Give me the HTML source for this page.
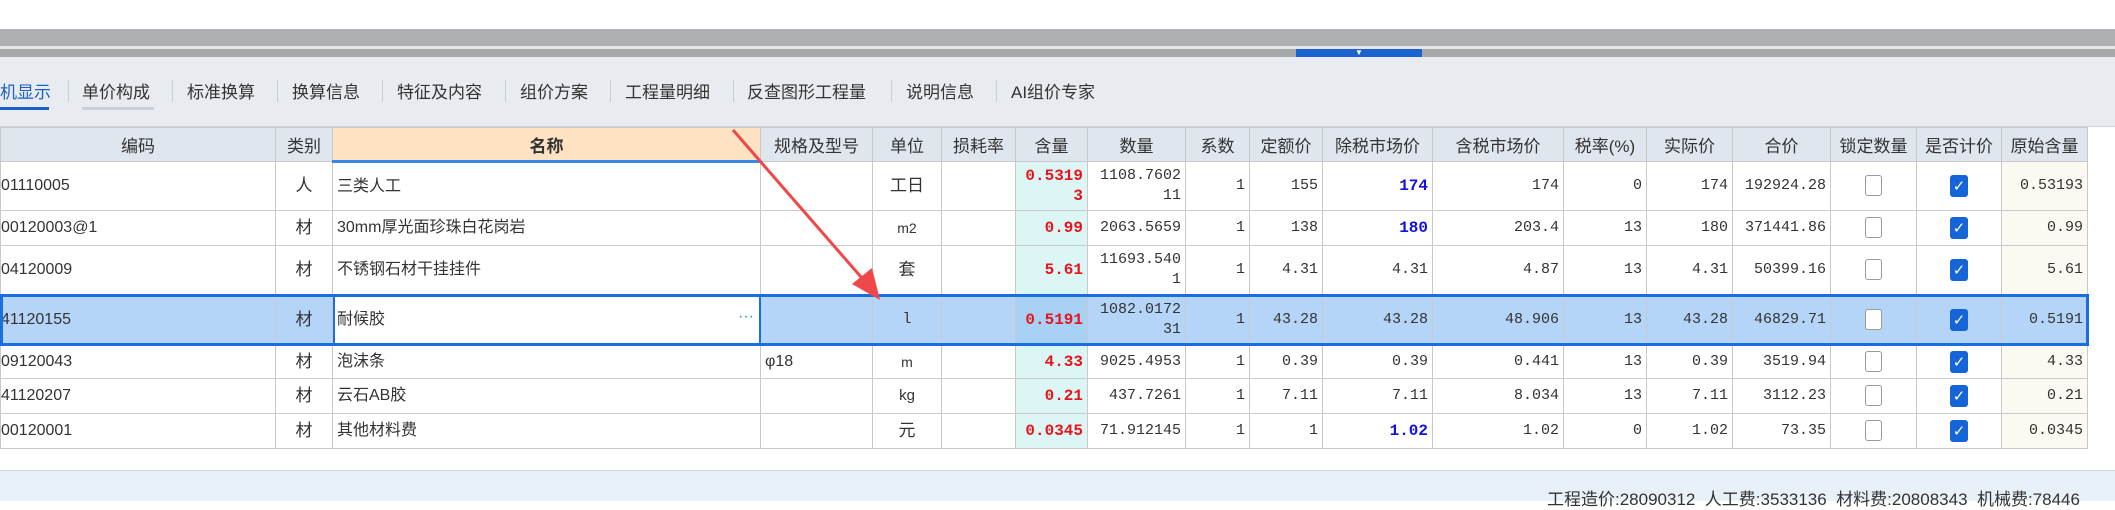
<!DOCTYPE html>
<html><head><meta charset="utf-8"><style>
*{margin:0;padding:0;box-sizing:border-box}
body{width:2115px;height:501px;overflow:hidden;background:#fff;position:relative;font-family:"Liberation Sans","Noto Sans CJK SC",sans-serif;color:#222}
.abs{position:absolute}
.tab{position:absolute;top:78px;font-size:17px;color:#333;white-space:nowrap}
.sep{position:absolute;top:80px;width:1px;height:22px;background:#c9ced4}
table{position:absolute;left:0;top:127px;border-collapse:collapse;table-layout:fixed;width:2087px;font-size:16px}
td,th{border:1px solid #c9c9c9;overflow:hidden;white-space:nowrap;padding:0 4px}
th{background:#dfe6ee;font-weight:normal;height:34px;color:#333;font-size:17px}
th.nm{background:#fde3c3;font-weight:bold;border-bottom:3px solid #3a86e8}
td{font-family:"Liberation Mono","Noto Sans CJK SC",monospace;font-size:15px;text-align:right;color:#333;line-height:20px}
td.l{text-align:left;font-family:"Liberation Sans","Noto Sans CJK SC",sans-serif;font-size:16px}
td.c{text-align:center;font-family:"Liberation Sans","Noto Sans CJK SC",sans-serif;font-size:17px}
td.q{background:#dcf6f6;color:#e8141c;font-weight:bold;font-size:16px}
td.o{background:#fcf8f2}
td.b{color:#1010e0;font-weight:bold;font-size:16px}
tr.sel td{background:#b5d5f8}
tr.sel td.q{background:#a8d2f5}
tr.sel{outline:3px solid #1a6fe0;outline-offset:-2px}
td.edit{background:#fff!important;outline:2px solid #1a6fe0;outline-offset:-2px;position:relative}
.cb{display:inline-block;width:17px;height:21px;border:1.5px solid #9a9a9a;border-radius:3px;background:#fff;vertical-align:middle}
.ck{display:inline-block;width:18px;height:22px;border-radius:3px;background:#1565d8;color:#fff;font-size:15px;line-height:22px;text-align:center;font-weight:bold;vertical-align:middle;font-family:"DejaVu Sans",sans-serif}
td.k{text-align:center}
</style></head><body>
<div class="abs" style="left:0;top:29px;width:2115px;height:17px;background:#adafb3"></div>
<div class="abs" style="left:0;top:46px;width:2115px;height:3px;background:#e4e6e8"></div>
<div class="abs" style="left:0;top:49px;width:2115px;height:8px;background:#a5a7ab"></div>
<div class="abs" style="left:1296px;top:49px;width:126px;height:8px;background:#1a62d0"></div>
<div class="abs" style="left:1355px;top:49px;color:#fff;font-size:8px;line-height:8px">▼</div>
<div class="abs" style="left:0;top:57px;width:2115px;height:70px;background:#e8ecf0;border-bottom:1px solid #cfd3d8"></div>
<div class="tab" style="left:0;color:#1a5fc8">机显示</div>
<div class="abs" style="left:0;top:107px;width:49px;height:3px;background:#1a5fc8"></div>
<div class="sep" style="left:68px"></div>
<div class="tab" style="left:82px">单价构成</div>
<div class="abs" style="left:82px;top:107px;width:72px;height:3px;background:#c8d0da"></div>
<div class="sep" style="left:172px"></div>
<div class="tab" style="left:187px">标准换算</div>
<div class="sep" style="left:277px"></div>
<div class="tab" style="left:292px">换算信息</div>
<div class="sep" style="left:382px"></div>
<div class="tab" style="left:397px">特征及内容</div>
<div class="sep" style="left:505px"></div>
<div class="tab" style="left:520px">组价方案</div>
<div class="sep" style="left:610px"></div>
<div class="tab" style="left:625px">工程量明细</div>
<div class="sep" style="left:733px"></div>
<div class="tab" style="left:747px">反查图形工程量</div>
<div class="sep" style="left:891px"></div>
<div class="tab" style="left:906px">说明信息</div>
<div class="sep" style="left:996px"></div>
<div class="tab" style="left:1011px">AI组价专家</div>

<table>
<colgroup><col style="width:275px"><col style="width:57px"><col style="width:428px"><col style="width:112px"><col style="width:69px"><col style="width:74px"><col style="width:72px"><col style="width:98px"><col style="width:64px"><col style="width:73px"><col style="width:110px"><col style="width:131px"><col style="width:83px"><col style="width:86px"><col style="width:98px"><col style="width:86px"><col style="width:85px"><col style="width:86px"></colgroup>
<tr><th>编码</th><th>类别</th><th class="nm">名称</th><th>规格及型号</th><th>单位</th><th>损耗率</th><th>含量</th><th>数量</th><th>系数</th><th>定额价</th><th>除税市场价</th><th>含税市场价</th><th>税率(%)</th><th>实际价</th><th>合价</th><th>锁定数量</th><th>是否计价</th><th>原始含量</th></tr>
<tr style="height:49px"><td class="l" style="padding:0">01110005</td><td class="c">人</td><td class="l">三类人工</td><td></td><td class="c">工日</td><td></td><td class="q">0.5319<br>3</td><td>1108.7602<br>11</td><td>1</td><td>155</td><td class="b">174</td><td>174</td><td>0</td><td>174</td><td>192924.28</td><td class="k"><span class="cb"></span></td><td class="k"><span class="ck">✓</span></td><td class="o">0.53193</td></tr>
<tr style="height:35px"><td class="l" style="padding:0">00120003@1</td><td class="c">材</td><td class="l">30mm厚光面珍珠白花岗岩</td><td></td><td class="c" style="font-size:14px">m2</td><td></td><td class="q">0.99</td><td>2063.5659</td><td>1</td><td>138</td><td class="b">180</td><td>203.4</td><td>13</td><td>180</td><td>371441.86</td><td class="k"><span class="cb"></span></td><td class="k"><span class="ck">✓</span></td><td class="o">0.99</td></tr>
<tr style="height:49px"><td class="l" style="padding:0">04120009</td><td class="c">材</td><td class="l">不锈钢石材干挂挂件</td><td></td><td class="c">套</td><td></td><td class="q">5.61</td><td>11693.540<br>1</td><td>1</td><td>4.31</td><td>4.31</td><td>4.87</td><td>13</td><td>4.31</td><td>50399.16</td><td class="k"><span class="cb"></span></td><td class="k"><span class="ck">✓</span></td><td class="o">5.61</td></tr>
<tr class="sel" style="height:50px"><td class="l" style="padding:0">41120155</td><td class="c">材</td><td class="l edit">耐候胶<span style="position:absolute;right:6px;top:12px;color:#3a86e8">···</span></td><td></td><td class="c" style="font-family:'Liberation Mono',monospace;font-size:15px">l</td><td></td><td class="q">0.5191</td><td>1082.0172<br>31</td><td>1</td><td>43.28</td><td>43.28</td><td>48.906</td><td>13</td><td>43.28</td><td>46829.71</td><td class="k"><span class="cb"></span></td><td class="k"><span class="ck">✓</span></td><td>0.5191</td></tr>
<tr style="height:34px"><td class="l" style="padding:0">09120043</td><td class="c">材</td><td class="l">泡沫条</td><td class="l">φ18</td><td class="c" style="font-size:14px">m</td><td></td><td class="q">4.33</td><td>9025.4953</td><td>1</td><td>0.39</td><td>0.39</td><td>0.441</td><td>13</td><td>0.39</td><td>3519.94</td><td class="k"><span class="cb"></span></td><td class="k"><span class="ck">✓</span></td><td class="o">4.33</td></tr>
<tr style="height:35px"><td class="l" style="padding:0">41120207</td><td class="c">材</td><td class="l">云石AB胶</td><td></td><td class="c" style="font-size:15px">kg</td><td></td><td class="q">0.21</td><td>437.7261</td><td>1</td><td>7.11</td><td>7.11</td><td>8.034</td><td>13</td><td>7.11</td><td>3112.23</td><td class="k"><span class="cb"></span></td><td class="k"><span class="ck">✓</span></td><td class="o">0.21</td></tr>
<tr style="height:35px"><td class="l" style="padding:0">00120001</td><td class="c">材</td><td class="l">其他材料费</td><td></td><td class="c">元</td><td></td><td class="q">0.0345</td><td>71.912145</td><td>1</td><td>1</td><td class="b">1.02</td><td>1.02</td><td>0</td><td>1.02</td><td>73.35</td><td class="k"><span class="cb"></span></td><td class="k"><span class="ck">✓</span></td><td class="o">0.0345</td></tr>
</table>

<div class="abs" style="left:0;top:470px;width:2115px;height:31px;background:#e8f0f8;border-top:1px solid #d4d8dc"></div>
<div class="abs" style="left:1547px;top:485px;font-size:17px;color:#333;white-space:nowrap">工程造价:28090312 &nbsp;人工费:3533136 &nbsp;材料费:20808343 &nbsp;机械费:78446</div>

<svg class="abs" style="left:0;top:0" width="2115" height="501">
<line x1="733" y1="130" x2="868" y2="285" stroke="#f04848" stroke-width="3"/>
<polygon points="880,300 852,284 872,268" fill="#f04848"/>
</svg>
</body></html>
